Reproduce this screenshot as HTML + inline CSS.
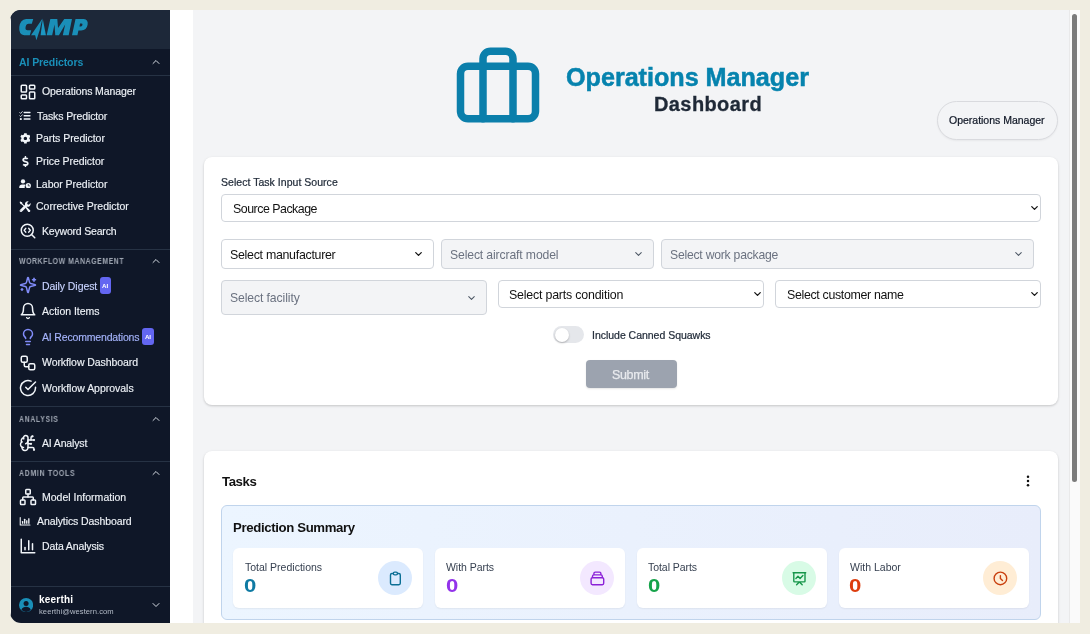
<!DOCTYPE html>
<html><head><meta charset="utf-8">
<style>
*{box-sizing:border-box;margin:0;padding:0}
html,body{width:1090px;height:634px;overflow:hidden;background:#f0ede1;font-family:"Liberation Sans",sans-serif;}
.abs{position:absolute}
.abs>svg{display:block}
#win{position:absolute;left:10px;top:10px;width:1070px;height:613px;border-radius:11px 0 0 11px;overflow:hidden;background:#fff}
.t{will-change:transform}
#side{position:absolute;left:0;top:0;width:160px;height:613px;background:#0f1728}
#logo{position:absolute;left:0;top:0;width:160px;height:39px;background:#1d2839}
.sep{position:absolute;left:0;width:160px;height:1px;background:#263244}
.t{position:absolute;white-space:nowrap;line-height:1;transform:translateY(-50%)}
.i{position:absolute;transform:translate(0,-50%);display:block}
.i svg{display:block}
#main{position:absolute;left:183px;top:0;width:877px;height:613px;background:#f3f4f6}
#sb{position:absolute;left:1059px;top:0;width:11px;height:613px;background:#fafafa;border-left:1px solid #e9e9ea}
#sb div{position:absolute;left:2px;top:4px;width:5px;height:468px;border-radius:3px;background:#7a7a7a}
.card{position:absolute;background:#fff;border-radius:8px;box-shadow:0 1px 3px rgba(0,0,0,.12),0 1px 2px rgba(0,0,0,.08)}
.sel{position:absolute;border:1px solid #d1d5db;border-radius:4px;background:#fff;font-size:12.5px;color:#111}
.sel.dis{background:#f3f4f6;color:#6b7280}
.stat{position:absolute;top:548px;width:191px;height:60px;background:#fff;border-radius:6px;box-shadow:0 1px 2px rgba(0,0,0,.06)}
.c{position:absolute;width:34px;height:34px;border-radius:17px}
.c svg{position:absolute;left:9px;top:9px}
</style></head><body>
<div id="win">

<div id="side"><div id="logo"></div>
<svg class="abs" style="left:4px;top:2px" width="80" height="32" viewBox="0 0 1090 436"><g fill="#1a8fb8"><path d="M262,95 L165,95 Q85,100 72,205 Q62,310 140,318 L215,318 L235,250 L185,250 Q150,250 158,205 Q166,160 200,160 L243,160 Z"/><path d="M388,88 L232,318 L288,318 L305,385 L350,250 L375,140 Z"/><path d="M392,95 L362,318 L435,318 Z" fill="#1c97c2"/><path d="M445,318 L495,95 L590,95 L600,218 L685,95 L790,95 L745,318 L665,318 L697,172 L612,318 L562,318 L552,172 L520,318 Z"/><path fill-rule="evenodd" d="M790,318 L838,95 L950,95 Q1015,100 1003,175 Q990,250 915,252 L878,252 L864,318 Z M900,155 L892,196 L912,196 Q930,194 933,174 Q935,155 918,155 Z"/></g></svg>
<div class="i" style="left:139.75px;top:52.4px;"><svg width="12" height="12" viewBox="0 0 24 24" fill="none" stroke="#d5dbe3" stroke-width="2" stroke-linecap="round" stroke-linejoin="round" ><path d="m18 15-6-6-6 6"/></svg></div>
<div class="sep" style="top:65px"></div>
<div class="i" style="left:8.600000000000001px;top:81.5px;"><svg width="18" height="18" viewBox="0 0 24 24" fill="none" stroke="#f1f5f9" stroke-width="2" stroke-linecap="round" stroke-linejoin="round" ><rect width="7" height="9" x="3" y="3" rx="1"/><rect width="7" height="5" x="14" y="3" rx="1"/><rect width="7" height="9" x="14" y="12" rx="1"/><rect width="7" height="5" x="3" y="16" rx="1"/></svg></div>
<div class="abs" style="left:9.10px;top:100.50px"><svg width="11.9" height="9.4" viewBox="0 0 24 20" fill="#f1f5f9"><rect x="9" y="1.500" width="15" height="3.200" rx="1"/><rect x="9" y="8.400" width="15" height="3.200" rx="1"/><rect x="9" y="15.300" width="15" height="3.200" rx="1"/><circle cx="3.200" cy="17" r="2.300"/><path d="M0.900 3.300l1.900 1.900 3.600-4" fill="none" stroke="#f1f5f9" stroke-width="1.700" stroke-linecap="round" stroke-linejoin="round"/><path d="M0.900 10.200l1.900 1.900 3.600-4" fill="none" stroke="#f1f5f9" stroke-width="1.700" stroke-linecap="round" stroke-linejoin="round"/></svg></div>
<div class="abs" style="left:9.50px;top:123.10px"><svg width="10.8" height="10.75" viewBox="0 0 512 512" fill="#f1f5f9"><path d="M487.4 315.7l-42.600-24.600c4.300-23.200 4.300-47 0-70.200l42.600-24.600c4.900-2.800 7.100-8.600 5.500-14-11.100-35.600-30-67.800-54.700-94.600-3.800-4.100-10-5.100-14.800-2.300L380.800 110c-17.900-15.400-38.500-27.300-60.800-35.100V25.800c0-5.600-3.900-10.500-9.400-11.700-36.700-8.200-74.300-7.800-109.200 0-5.500 1.200-9.400 6.100-9.400 11.700V75c-22.200 7.900-42.800 19.800-60.800 35.100L88.700 85.500c-4.900-2.800-11-1.900-14.800 2.300-24.700 26.700-43.600 58.900-54.700 94.600-1.700 5.400.6 11.200 5.500 14L67.300 221c-4.300 23.200-4.300 47 0 70.200l-42.600 24.600c-4.900 2.800-7.100 8.600-5.500 14 11.100 35.600 30 67.800 54.700 94.600 3.800 4.100 10 5.100 14.800 2.300l42.600-24.600c17.900 15.400 38.500 27.300 60.800 35.100v49.200c0 5.600 3.900 10.500 9.400 11.700 36.700 8.200 74.300 7.800 109.200 0 5.500-1.200 9.400-6.100 9.400-11.700v-49.200c22.200-7.900 42.800-19.800 60.800-35.100l42.600 24.600c4.900 2.800 11 1.900 14.800-2.300 24.700-26.700 43.600-58.900 54.700-94.600 1.500-5.500-.7-11.300-5.600-14.100zM256 336c-44.100 0-80-35.900-80-80s35.900-80 80-80 80 35.900 80 80-35.900 80-80 80z"/></svg></div>
<div class="abs" style="left:11.70px;top:145.60px"><svg width="6.9" height="11.3" viewBox="0 0 288 512" fill="#f1f5f9"><path d="M209.200 233.400l-108-31.600C88.700 198.200 80 186.500 80 173.500c0-16.300 13.200-29.500 29.500-29.500h66.300c12.200 0 24.200 3.700 34.200 10.500 6.100 4.100 14.300 3.100 19.500-2l34.800-34c7.100-6.900 6.100-18.400-1.800-24.500C238 74.800 207.400 64.100 176 64V16c0-8.800-7.200-16-16-16h-32c-8.800 0-16 7.200-16 16v48h-2.500C45.800 64-5.400 118.700.5 183.600c4.200 46.100 39.400 83.600 83.800 96.600l102.500 30c12.500 3.700 21.200 15.300 21.200 28.300 0 16.300-13.200 29.500-29.500 29.500h-66.300C100 368 88 364.300 78 357.500c-6.100-4.100-14.300-3.100-19.500 2l-34.800 34c-7.100 6.900-6.100 18.400 1.800 24.500 24.500 19.200 55.100 29.900 86.500 30v48c0 8.800 7.200 16 16 16h32c8.800 0 16-7.200 16-16v-48.200c46.600-.9 90.300-28.600 105.700-72.700 21.500-61.600-14.600-124.800-72.500-141.700z"/></svg></div>
<div class="abs" style="left:8.80px;top:168.90px"><svg width="12.2" height="9.5" viewBox="0 0 26 20" fill="#f1f5f9"><circle cx="8.500" cy="5" r="4.600"/><path d="M0.500 19.500v-2.300c0-3.400 2.700-5.700 6-5.700h4c1.300 0 2.400 .3 3.400 .9a7.500 7.500 0 0 0 -1.400 7.100z"/><circle cx="19.800" cy="14.200" r="5.600"/><path d="M19.800 11.200v3.300h2.600" fill="none" stroke="#0f172a" stroke-width="1.500" stroke-linecap="round"/></svg></div>
<div class="abs" style="left:9.10px;top:190.60px"><svg width="11.9" height="11.7" viewBox="0 0 24 24" fill="#f1f5f9"><path d="M2.200 1 L6 2.800 L7 5.400 L11.400 9.800 L9.800 11.400 L5.400 7 L2.800 6 L1 2.200Z"/><path d="M13.200 13.800l2-2 7.200 7.200a1.900 1.900 0 0 1 0 2.700l-.7.700a1.900 1.900 0 0 1-2.700 0z"/><path d="M23.300 4.300 L20.100 7.500 L17.200 6.800 L16.500 3.900 L19.700 .7 A5.800 5.800 0 0 0 12.300 7.900 L1.700 18.500 A2.700 2.700 0 0 0 5.500 22.300 L16.100 11.700 A5.800 5.800 0 0 0 23.300 4.300 Z M3.600 21.300 a.9 .9 0 1 1 0-1.900 a.9 .9 0 0 1 0 1.900z" fill-rule="evenodd"/></svg></div>
<div class="i" style="left:8.8px;top:220.6px;"><svg width="18" height="18" viewBox="0 0 24 24" fill="none" stroke="#f1f5f9" stroke-width="2" stroke-linecap="round" stroke-linejoin="round" ><path d="m13 13.5 2-2.500-2-2.500"/><path d="m21 21-4.300-4.300"/><path d="M9 8.500 7 11l2 2.500"/><circle cx="11" cy="11" r="8"/></svg></div>
<div class="sep" style="top:239px"></div>
<div class="i" style="left:139.75px;top:251px;"><svg width="12" height="12" viewBox="0 0 24 24" fill="none" stroke="#d5dbe3" stroke-width="2" stroke-linecap="round" stroke-linejoin="round" ><path d="m18 15-6-6-6 6"/></svg></div>
<div class="i" style="left:9.100000000000001px;top:275.2px;"><svg width="18" height="18" viewBox="0 0 24 24" fill="none" stroke="#818cf8" stroke-width="2" stroke-linecap="round" stroke-linejoin="round" ><path d="M9.937 15.500A2 2 0 0 0 8.500 14.063l-6.135-1.582a.5.5 0 0 1 0-.962L8.500 9.936A2 2 0 0 0 9.937 8.500l1.582-6.135a.5.5 0 0 1 .963 0L14.063 8.500A2 2 0 0 0 15.500 9.937l6.135 1.581a.5.5 0 0 1 0 .964L15.500 14.063a2 2 0 0 0-1.437 1.437l-1.582 6.135a.5.5 0 0 1-.963 0z"/><path d="M20 3v4"/><path d="M22 5h-4"/><path d="M4 17v2"/><path d="M5 18H3"/></svg></div>
<div class="i" style="left:8.600000000000001px;top:300.9px;"><svg width="18" height="18" viewBox="0 0 24 24" fill="none" stroke="#f1f5f9" stroke-width="2" stroke-linecap="round" stroke-linejoin="round" ><path d="M6 8a6 6 0 0 1 12 0c0 7 3 9 3 9H3s3-2 3-9"/><path d="M10.300 21a1.940 1.940 0 0 0 3.400 0"/></svg></div>
<div class="i" style="left:8.8px;top:326.9px;"><svg width="18" height="18" viewBox="0 0 24 24" fill="none" stroke="#818cf8" stroke-width="2" stroke-linecap="round" stroke-linejoin="round" ><path d="M15 14c.2-1 .7-1.700 1.500-2.500 1-.9 1.500-2.200 1.500-3.500A6 6 0 0 0 6 8c0 1 .2 2.200 1.500 3.500.7.700 1.300 1.500 1.500 2.500"/><path d="M9 18h6"/><path d="M10 22h4"/></svg></div>
<div class="i" style="left:8.8px;top:352.5px;"><svg width="18" height="18" viewBox="0 0 24 24" fill="none" stroke="#f1f5f9" stroke-width="2" stroke-linecap="round" stroke-linejoin="round" ><rect width="8" height="8" x="3" y="3" rx="2"/><path d="M7 11v4a2 2 0 0 0 2 2h4"/><rect width="8" height="8" x="13" y="13" rx="2"/></svg></div>
<div class="i" style="left:9.0px;top:378.0px;"><svg width="18" height="18" viewBox="0 0 24 24" fill="none" stroke="#f1f5f9" stroke-width="2" stroke-linecap="round" stroke-linejoin="round" ><path d="M22 11.080V12a10 10 0 1 1-5.930-9.140"/><path d="m9 11 3 3L22 4"/></svg></div>
<div class="abs" style="left:89.500px;top:267px;width:11.800px;height:17px;border-radius:3px;background:#6366f1"></div>
<div class="abs" style="left:131.800px;top:318px;width:12px;height:17.300px;border-radius:3px;background:#6366f1"></div>
<div class="sep" style="top:396px"></div>
<div class="i" style="left:139.75px;top:408.6px;"><svg width="12" height="12" viewBox="0 0 24 24" fill="none" stroke="#d5dbe3" stroke-width="2" stroke-linecap="round" stroke-linejoin="round" ><path d="m18 15-6-6-6 6"/></svg></div>
<div class="i" style="left:8.600000000000001px;top:432.6px;"><svg width="18" height="18" viewBox="0 0 24 24" fill="none" stroke="#f1f5f9" stroke-width="2" stroke-linecap="round" stroke-linejoin="round" ><path d="M12 5a3 3 0 1 0-5.997.125 4 4 0 0 0-2.526 5.770 4 4 0 0 0 .556 6.588A4 4 0 1 0 12 18Z"/><path d="M9 13a4.500 4.500 0 0 0 3-4"/><path d="M6.003 5.125A3 3 0 0 0 6.401 6.500"/><path d="M3.477 10.896a4 4 0 0 1 .585-.396"/><path d="M6 18a4 4 0 0 1-1.967-.516"/><path d="M12 13h4"/><path d="M12 18h6a2 2 0 0 1 2 2v1"/><path d="M12 8h8"/><path d="M16 8V5a2 2 0 0 1 2-2"/><circle cx="16" cy="13" r=".5"/><circle cx="18" cy="3" r=".5"/><circle cx="20" cy="21" r=".5"/><circle cx="20" cy="8" r=".5"/></svg></div>
<div class="sep" style="top:451px"></div>
<div class="i" style="left:139.75px;top:463.2px;"><svg width="12" height="12" viewBox="0 0 24 24" fill="none" stroke="#d5dbe3" stroke-width="2" stroke-linecap="round" stroke-linejoin="round" ><path d="m18 15-6-6-6 6"/></svg></div>
<div class="i" style="left:8.8px;top:487.2px;"><svg width="18" height="18" viewBox="0 0 24 24" fill="none" stroke="#f1f5f9" stroke-width="2" stroke-linecap="round" stroke-linejoin="round" ><rect x="16" y="16" width="6" height="6" rx="1"/><rect x="2" y="16" width="6" height="6" rx="1"/><rect x="9" y="2" width="6" height="6" rx="1"/><path d="M5 16v-3a1 1 0 0 1 1-1h12a1 1 0 0 1 1 1v3"/><path d="M12 12V8"/></svg></div>
<div class="abs" style="left:8.80px;top:507.00px"><svg width="12.2" height="9.0" viewBox="0 0 24 20" fill="#f1f5f9"><path d="M0 1.200a1.200 1.200 0 0 1 2.400 0v15.400h20.400a1.200 1.200 0 0 1 0 2.400H1.200A1.200 1.200 0 0 1 0 17.800z"/><rect x="5" y="9" width="3" height="6" rx=".8"/><rect x="9.600" y="4" width="3" height="11" rx=".8"/><rect x="14.200" y="7" width="3" height="8" rx=".8"/><rect x="18.800" y="2.500" width="3" height="12.500" rx=".8"/></svg></div>
<div class="i" style="left:8.8px;top:535.7px;"><svg width="18" height="18" viewBox="0 0 24 24" fill="none" stroke="#f1f5f9" stroke-width="2" stroke-linecap="round" stroke-linejoin="round" ><path d="M3 3v18h18"/><path d="M18 17V9"/><path d="M13 17V5"/><path d="M8 17v-3"/></svg></div>
<div class="sep" style="top:576px"></div>
<svg class="abs" style="left:9.200px;top:587.600px" width="14.200" height="14.200" viewBox="0 0 26 26"><circle cx="13" cy="13" r="13" fill="#1a8fb8"/><circle cx="13" cy="10" r="4.600" fill="#0f172a"/><path d="M4.500 21.500c1.500-4 4.800-5.500 8.500-5.500s7 1.500 8.500 5.500a11 11 0 0 1-17 0z" fill="#0f172a"/></svg>
<div class="i" style="left:139.75px;top:595px;"><svg width="12" height="12" viewBox="0 0 24 24" fill="none" stroke="#d5dbe3" stroke-width="2" stroke-linecap="round" stroke-linejoin="round" ><path d="m6 9 6 6 6-6"/></svg></div>
<div class="abs" style="left:0;top:0;width:1px;height:613px;background:#f4f2ec"></div>
</div>
<div id="main"></div><div id="sb"><div></div></div>
<div class="abs" style="left:443px;top:29.5px;color:#0b7fab"><svg width="90" height="90" viewBox="0 0 24 24" fill="none" stroke="currentColor" stroke-width="2" stroke-linecap="round" stroke-linejoin="round" ><rect x="2" y="7" width="20" height="14" rx="2" ry="2"/><path d="M16 21V5a2 2 0 0 0-2-2h-4a2 2 0 0 0-2 2v16"/></svg></div>
<div class="abs" style="left:927px;top:91px;width:121px;height:39px;border-radius:20px;background:#f3f4f6;border:1px solid #d9dade;box-shadow:0 1px 2px rgba(0,0,0,.05)"></div>
<div class="card" style="left:194px;top:147px;width:854px;height:248px"></div>
<div class="sel" style="left:211px;top:184px;width:820px;height:28px"></div>
<div class="i" style="left:1019.3px;top:198.0px;"><svg width="11" height="11" viewBox="0 0 24 24" fill="none" stroke="#111" stroke-width="2.7" stroke-linecap="round" stroke-linejoin="round" ><path d="m6 9 6 6 6-6"/></svg></div>
<div class="sel" style="left:211px;top:229px;width:213px;height:30px"></div>
<div class="i" style="left:403.3px;top:244.0px;"><svg width="11" height="11" viewBox="0 0 24 24" fill="none" stroke="#111" stroke-width="2.7" stroke-linecap="round" stroke-linejoin="round" ><path d="m6 9 6 6 6-6"/></svg></div>
<div class="sel dis" style="left:431px;top:229px;width:213px;height:30px"></div>
<div class="i" style="left:623.1px;top:244.0px;"><svg width="11" height="11" viewBox="0 0 24 24" fill="none" stroke="#4b5563" stroke-width="2.2" stroke-linecap="round" stroke-linejoin="round" ><path d="m6 9 6 6 6-6"/></svg></div>
<div class="sel dis" style="left:651px;top:229px;width:373px;height:30px"></div>
<div class="i" style="left:1003.1px;top:244.0px;"><svg width="11" height="11" viewBox="0 0 24 24" fill="none" stroke="#4b5563" stroke-width="2.2" stroke-linecap="round" stroke-linejoin="round" ><path d="m6 9 6 6 6-6"/></svg></div>
<div class="sel dis" style="left:211px;top:270px;width:266px;height:35px"></div>
<div class="i" style="left:456.3px;top:287.5px;"><svg width="11" height="11" viewBox="0 0 24 24" fill="none" stroke="#4b5563" stroke-width="2.2" stroke-linecap="round" stroke-linejoin="round" ><path d="m6 9 6 6 6-6"/></svg></div>
<div class="sel" style="left:488px;top:270px;width:266px;height:28px"></div>
<div class="i" style="left:742.4px;top:284.0px;"><svg width="11" height="11" viewBox="0 0 24 24" fill="none" stroke="#111" stroke-width="2.7" stroke-linecap="round" stroke-linejoin="round" ><path d="m6 9 6 6 6-6"/></svg></div>
<div class="sel" style="left:765px;top:270px;width:266px;height:28px"></div>
<div class="i" style="left:1019.3px;top:284.0px;"><svg width="11" height="11" viewBox="0 0 24 24" fill="none" stroke="#111" stroke-width="2.7" stroke-linecap="round" stroke-linejoin="round" ><path d="m6 9 6 6 6-6"/></svg></div>
<div class="abs" style="left:543px;top:316px;width:31px;height:17px;border-radius:9px;background:#e5e7eb"><div class="abs" style="left:1.500px;top:1.500px;width:14px;height:14px;border-radius:7px;background:#fff;box-shadow:0 1px 2px rgba(0,0,0,.25)"></div></div>
<div class="abs" style="left:576px;top:350px;width:91px;height:28px;border-radius:4px;background:#9ca3af;box-shadow:0 1px 2px rgba(0,0,0,.1)"></div>
<div class="card" style="left:194px;top:441px;width:854px;height:200px"></div>
<svg class="abs" style="left:1011px;top:464px" width="14" height="14" viewBox="0 0 14 14" fill="#111"><circle cx="7" cy="2.800" r="1.250"/><circle cx="7" cy="7" r="1.250"/><circle cx="7" cy="11.200" r="1.250"/></svg>
<div class="abs" style="left:211px;top:495px;width:820px;height:115px;border-radius:6px;border:1px solid #c0d4ec;background:linear-gradient(90deg,#ecf5ff,#e8edfb)"></div>
<div class="stat" style="left:223.2px;top:538px;width:190.3px"></div>
<div class="abs" style="left:368.30px;top:551.10px;width:34px;height:34px;border-radius:17px;background:#dbeafe"><svg style="position:absolute;left:8.6px;top:8.6px"  width="16.8" height="16.8" viewBox="0 0 24 24" fill="none" stroke="#0b6f95" stroke-width="2" stroke-linecap="round" stroke-linejoin="round"><path d="M9 5H7a2 2 0 00-2 2v12a2 2 0 002 2h10a2 2 0 002-2V7a2 2 0 00-2-2h-2M9 5a2 2 0 002 2h2a2 2 0 002-2M9 5a2 2 0 012-2h2a2 2 0 012 2"/></svg></div>
<div class="stat" style="left:424.9px;top:538px;width:190.3px"></div>
<div class="abs" style="left:570.00px;top:551.10px;width:34px;height:34px;border-radius:17px;background:#f3e8ff"><svg style="position:absolute;left:8.6px;top:8.6px"  width="16.8" height="16.8" viewBox="0 0 24 24" fill="none" stroke="#8b22d8" stroke-width="2" stroke-linecap="round" stroke-linejoin="round"><path d="M19 11H5m14 0a2 2 0 012 2v6a2 2 0 01-2 2H5a2 2 0 01-2-2v-6a2 2 0 012-2m14 0V9a2 2 0 00-2-2M5 11V9a2 2 0 012-2m0 0V5a2 2 0 012-2h6a2 2 0 012 2v2M7 7h10"/></svg></div>
<div class="stat" style="left:626.7px;top:538px;width:190.3px"></div>
<div class="abs" style="left:771.95px;top:551.10px;width:34px;height:34px;border-radius:17px;background:#d8fbe6"><svg style="position:absolute;left:8.6px;top:8.6px"  width="16.8" height="16.8" viewBox="0 0 24 24" fill="none" stroke="#16964a" stroke-width="2" stroke-linecap="round" stroke-linejoin="round"><path d="M7 12l3-3 3 3 4-4M8 21l4-4 4 4M3 4h18M4 4h16v12a1 1 0 01-1 1H5a1 1 0 01-1-1V4z"/></svg></div>
<div class="stat" style="left:828.5px;top:538px;width:190.3px"></div>
<div class="abs" style="left:973.40px;top:551.10px;width:34px;height:34px;border-radius:17px;background:#ffedd5"><svg style="position:absolute;left:8.6px;top:8.6px"  width="16.8" height="16.8" viewBox="0 0 24 24" fill="none" stroke="#c9400f" stroke-width="2" stroke-linecap="round" stroke-linejoin="round"><path d="M12 8v4l3 3m6-3a9 9 0 11-18 0 9 9 0 0118 0z"/></svg></div>
<div class="t" id="t_aip" style="left:9.35px;top:52.19px;font-size:10.5px;font-weight:bold;color:#1a8fb8;letter-spacing:-0.090px;">AI Predictors</div>
<div class="t" id="t_n1" style="left:31.97px;top:81.33px;font-size:10.5px;font-weight:normal;color:#eef2f7;letter-spacing:-0.108px;-webkit-text-stroke:0.15px;">Operations Manager</div>
<div class="t" id="t_n2" style="left:26.73px;top:105.56px;font-size:10.5px;font-weight:normal;color:#eef2f7;letter-spacing:-0.101px;-webkit-text-stroke:0.15px;">Tasks Predictor</div>
<div class="t" id="t_n3" style="left:26.02px;top:128.47px;font-size:10.5px;font-weight:normal;color:#eef2f7;letter-spacing:-0.038px;-webkit-text-stroke:0.15px;">Parts Predictor</div>
<div class="t" id="t_n4" style="left:26.11px;top:151.49px;font-size:10.5px;font-weight:normal;color:#eef2f7;letter-spacing:-0.049px;-webkit-text-stroke:0.15px;">Price Predictor</div>
<div class="t" id="t_n5" style="left:26.12px;top:173.62px;font-size:10.5px;font-weight:normal;color:#eef2f7;letter-spacing:-0.027px;-webkit-text-stroke:0.15px;">Labor Predictor</div>
<div class="t" id="t_n6" style="left:26.13px;top:196.23px;font-size:10.5px;font-weight:normal;color:#eef2f7;letter-spacing:0.004px;-webkit-text-stroke:0.15px;">Corrective Predictor</div>
<div class="t" id="t_n7" style="left:32.04px;top:220.55px;font-size:10.5px;font-weight:normal;color:#eef2f7;letter-spacing:-0.193px;-webkit-text-stroke:0.15px;">Keyword Search</div>
<div class="t" id="t_s1" style="left:9.19px;top:252.26px;font-size:8.2px;font-weight:bold;color:#a3aab6;letter-spacing:0.698px;transform:translateY(-50%) scaleX(0.840);transform-origin:0 50%;">WORKFLOW MANAGEMENT</div>
<div class="t" id="t_n8" style="left:31.69px;top:275.67px;font-size:10.5px;font-weight:normal;color:#c7d2fe;letter-spacing:-0.068px;-webkit-text-stroke:0.15px;">Daily Digest</div>
<div class="t" id="t_n9" style="left:32.25px;top:301.14px;font-size:10.5px;font-weight:normal;color:#eef2f7;letter-spacing:-0.030px;-webkit-text-stroke:0.15px;">Action Items</div>
<div class="t" id="t_n10" style="left:32.01px;top:326.55px;font-size:10.5px;font-weight:normal;color:#a5b4fc;letter-spacing:-0.167px;-webkit-text-stroke:0.15px;">AI Recommendations</div>
<div class="t" id="t_n11" style="left:32.46px;top:352.26px;font-size:10.5px;font-weight:normal;color:#eef2f7;letter-spacing:-0.074px;-webkit-text-stroke:0.15px;">Workflow Dashboard</div>
<div class="t" id="t_n12" style="left:32.29px;top:377.68px;font-size:10.5px;font-weight:normal;color:#eef2f7;letter-spacing:-0.021px;-webkit-text-stroke:0.15px;">Workflow Approvals</div>
<div class="t" id="t_s2" style="left:9.31px;top:409.73px;font-size:8.2px;font-weight:bold;color:#a3aab6;letter-spacing:0.791px;transform:translateY(-50%) scaleX(0.840);transform-origin:0 50%;">ANALYSIS</div>
<div class="t" id="t_n13" style="left:32.06px;top:432.76px;font-size:10.5px;font-weight:normal;color:#eef2f7;letter-spacing:-0.146px;-webkit-text-stroke:0.15px;">AI Analyst</div>
<div class="t" id="t_s3" style="left:9.05px;top:464.17px;font-size:8.2px;font-weight:bold;color:#a3aab6;letter-spacing:0.901px;transform:translateY(-50%) scaleX(0.840);transform-origin:0 50%;">ADMIN TOOLS</div>
<div class="t" id="t_n14" style="left:31.63px;top:487.23px;font-size:10.5px;font-weight:normal;color:#eef2f7;letter-spacing:0.009px;-webkit-text-stroke:0.15px;">Model Information</div>
<div class="t" id="t_n15" style="left:26.77px;top:511.35px;font-size:10.5px;font-weight:normal;color:#eef2f7;letter-spacing:-0.090px;-webkit-text-stroke:0.15px;">Analytics Dashboard</div>
<div class="t" id="t_n16" style="left:31.60px;top:535.64px;font-size:10.5px;font-weight:normal;color:#eef2f7;letter-spacing:-0.129px;-webkit-text-stroke:0.15px;">Data Analysis</div>
<div class="t" id="t_u1" style="left:28.86px;top:590.06px;font-size:10.0px;font-weight:bold;color:#ffffff;letter-spacing:0.203px;">keerthi</div>
<div class="t" id="t_u2" style="left:28.68px;top:602.46px;font-size:7.6px;font-weight:normal;color:#b4bcc8;letter-spacing:0.058px;">keerthi@western.com</div>
<div class="t" id="t_b1" style="left:92.19px;top:275.69px;font-size:6.2px;font-weight:bold;color:#ffffff;letter-spacing:-0.082px;">AI</div>
<div class="t" id="t_b2" style="left:134.76px;top:326.83px;font-size:6.2px;font-weight:bold;color:#ffffff;letter-spacing:-0.124px;">AI</div>
<div class="t" id="t_h1" style="left:556.24px;top:68.15px;font-size:25.2px;font-weight:bold;color:#0683ae;letter-spacing:-0.035px;-webkit-text-stroke:0.5px;">Operations Manager</div>
<div class="t" id="t_h2" style="left:644.40px;top:94.34px;font-size:20.0px;font-weight:bold;color:#1f2937;letter-spacing:0.398px;-webkit-text-stroke:0.3px;">Dashboard</div>
<div class="t" id="t_pill" style="left:939.23px;top:110.46px;font-size:10.5px;font-weight:normal;color:#111827;letter-spacing:-0.009px;-webkit-text-stroke:0.22px;">Operations Manager</div>
<div class="t" id="t_lab" style="left:210.97px;top:171.51px;font-size:10.5px;font-weight:normal;color:#1f2937;letter-spacing:0.033px;-webkit-text-stroke:0.22px;">Select Task Input Source</div>
<div class="t" id="t_f1" style="left:222.58px;top:198.99px;font-size:12.4px;font-weight:normal;color:#111111;letter-spacing:-0.496px;">Source Package</div>
<div class="t" id="t_f2" style="left:219.76px;top:244.70px;font-size:12.4px;font-weight:normal;color:#111111;letter-spacing:-0.286px;">Select manufacturer</div>
<div class="t" id="t_f3" style="left:439.75px;top:244.92px;font-size:12.2px;font-weight:normal;color:#6b7280;letter-spacing:-0.127px;">Select aircraft model</div>
<div class="t" id="t_f4" style="left:660.15px;top:244.92px;font-size:12.2px;font-weight:normal;color:#6b7280;letter-spacing:-0.232px;">Select work package</div>
<div class="t" id="t_f5" style="left:219.51px;top:287.84px;font-size:12.2px;font-weight:normal;color:#6b7280;letter-spacing:-0.097px;">Select facility</div>
<div class="t" id="t_f6" style="left:499.29px;top:284.99px;font-size:12.4px;font-weight:normal;color:#111111;letter-spacing:-0.200px;">Select parts condition</div>
<div class="t" id="t_f7" style="left:776.84px;top:284.73px;font-size:12.4px;font-weight:normal;color:#111111;letter-spacing:-0.336px;">Select customer name</div>
<div class="t" id="t_tog" style="left:581.70px;top:324.54px;font-size:10.5px;font-weight:normal;color:#1f2937;letter-spacing:-0.022px;-webkit-text-stroke:0.22px;">Include Canned Squawks</div>
<div class="t" id="t_sub" style="left:602.09px;top:364.86px;font-size:12.5px;font-weight:normal;color:#e8eaee;letter-spacing:-0.339px;-webkit-text-stroke:0.25px;">Submit</div>
<div class="t" id="t_tasks" style="left:211.89px;top:471.52px;font-size:13.2px;font-weight:bold;color:#111111;letter-spacing:-0.400px;">Tasks</div>
<div class="t" id="t_ps" style="left:222.58px;top:517.66px;font-size:13.2px;font-weight:bold;color:#111111;letter-spacing:-0.356px;">Prediction Summary</div>
<div class="t" id="t_l1" style="left:234.81px;top:556.81px;font-size:10.5px;font-weight:normal;color:#374151;letter-spacing:0.003px;">Total Predictions</div>
<div class="t" id="t_l2" style="left:436.19px;top:556.53px;font-size:10.5px;font-weight:normal;color:#374151;letter-spacing:-0.037px;">With Parts</div>
<div class="t" id="t_l3" style="left:637.63px;top:556.72px;font-size:10.5px;font-weight:normal;color:#374151;letter-spacing:-0.054px;">Total Parts</div>
<div class="t" id="t_l4" style="left:839.65px;top:556.63px;font-size:10.5px;font-weight:normal;color:#374151;letter-spacing:0.009px;">With Labor</div>
<div class="t" id="t_v1" style="left:234.00px;top:576.23px;font-size:18.2px;font-weight:bold;color:#0f7aa3;letter-spacing:0.000px;transform:translateY(-50%) scaleX(1.218);transform-origin:0 50%;">0</div>
<div class="t" id="t_v2" style="left:435.52px;top:576.25px;font-size:18.2px;font-weight:bold;color:#9333ea;letter-spacing:0.000px;transform:translateY(-50%) scaleX(1.214);transform-origin:0 50%;">0</div>
<div class="t" id="t_v3" style="left:637.50px;top:576.17px;font-size:18.2px;font-weight:bold;color:#16a34a;letter-spacing:0.000px;transform:translateY(-50%) scaleX(1.213);transform-origin:0 50%;">0</div>
<div class="t" id="t_v4" style="left:839.30px;top:576.23px;font-size:18.2px;font-weight:bold;color:#dd3d0e;letter-spacing:0.000px;transform:translateY(-50%) scaleX(1.219);transform-origin:0 50%;">0</div>
</div></body></html>
